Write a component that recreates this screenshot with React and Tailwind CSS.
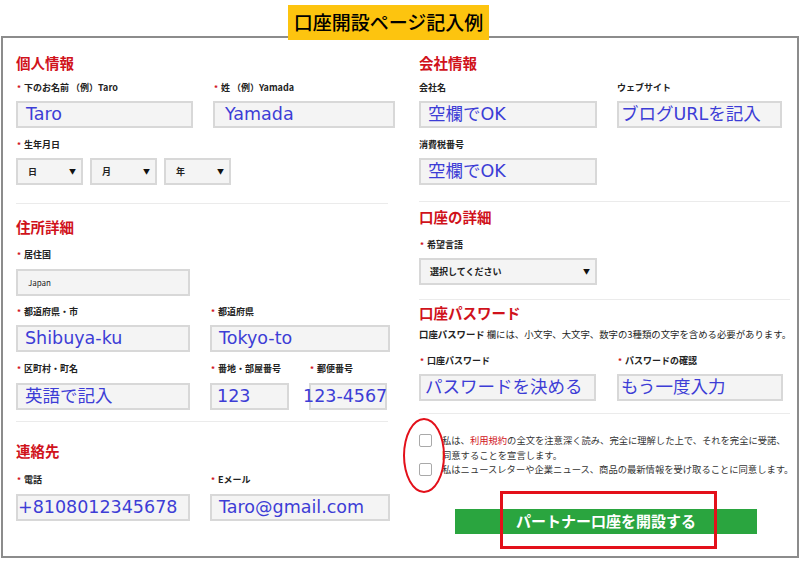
import React from "react";

const jp = "font-['Noto_Sans_CJK_JP',sans-serif]";
const val = "font-['DejaVu_Sans','Noto_Sans_CJK_JP',sans-serif]";

function Label({ req, children, className = "" }) {
  return (
    <div className={`flex items-center h-[14px] leading-[14px] text-[9px] font-bold text-[#222] whitespace-nowrap ${className}`}>
      {req && <span className="text-[#d0121b] text-[8px] ml-[1px] mr-[3px]">*</span>}
      {children}
    </div>
  );
}

function Box({ children, className = "", text = "pl-[7px]" }) {
  return (
    <div className={`h-[27px] bg-[#f4f4f4] border-2 border-[#d8d8d8] flex items-center ${text} text-[17.5px] text-[#3d3dd6] whitespace-nowrap ${val} ${className}`}>
      {children}
    </div>
  );
}

function Select({ label, className = "", pad = "pl-[10px] pr-[5px]" }) {
  return (
    <div className={`h-[27px] bg-[#f4f4f4] border-2 border-[#d8d8d8] flex items-center justify-between ${pad} ${className}`}>
      <span className="text-[9px] font-bold text-[#222]">{label}</span>
      <span className="text-[7px] text-[#111]">▼</span>
    </div>
  );
}

function Heading({ children, className = "" }) {
  return (
    <div className={`h-[20px] leading-[20px] text-[14.5px] font-bold text-[#d0121b] ${className}`}>
      {children}
    </div>
  );
}

export default function App() {
  return (
    <div className={`relative w-[800px] h-[567px] bg-white overflow-hidden ${jp}`}>
      {/* frame */}
      <div className="ml-[1px] mt-[36px] w-[798px] h-[522px] border-2 border-[#8c8c8c] flex pl-[13px] pt-[15px]">
        {/* left column */}
        <div className="w-[403px] shrink-0 flex flex-col">
          <Heading>個人情報</Heading>
          <div className="mt-[8px] flex">
            <Label req className="w-[197px]">下のお名前 （例）Taro</Label>
            <Label req>姓 （例）Yamada</Label>
          </div>
          <div className="mt-[6px] flex gap-[20px]">
            <Box className="w-[177px]" text="pl-[8px]">Taro</Box>
            <Box className="w-[182px]" text="pl-[10px]">Yamada</Box>
          </div>
          <Label req className="mt-[10px]">生年月日</Label>
          <div className="mt-[6px] flex gap-[7px]">
            <Select label="日" className="w-[67px]" />
            <Select label="月" className="w-[67px]" />
            <Select label="年" className="w-[67px]" />
          </div>
          <div className="mt-[18px] w-[372px] h-px bg-[#ebebeb]" />

          <Heading className="mt-[13px]">住所詳細</Heading>
          <Label req className="mt-[11px]">居住国</Label>
          <div className="mt-[7px] w-[174px] h-[27px] bg-[#f4f4f4] border-2 border-[#d8d8d8] flex items-center pl-[10px] text-[8px] text-[#222]">
            Japan
          </div>
          <div className="mt-[9px] flex">
            <Label req className="w-[194px]">都道府県・市</Label>
            <Label req>都道府県</Label>
          </div>
          <div className="mt-[6px] flex gap-[20px]">
            <Box className="w-[174px] h-[26px]">Shibuya-ku</Box>
            <Box className="w-[180px] h-[26px]">Tokyo-to</Box>
          </div>
          <div className="mt-[10px] flex">
            <Label req className="w-[194px]">区町村・町名</Label>
            <Label req className="w-[99px]">番地・部屋番号</Label>
            <Label req>郵便番号</Label>
          </div>
          <div className="mt-[7px] flex">
            <Box className="w-[174px] h-[26px]">英語で記入</Box>
            <Box className="w-[79px] h-[26px] ml-[20px]" text="pl-[5px]">123</Box>
            <Box className="w-[78px] h-[26px] ml-[20px]" text="pl-0">
              <span className="ml-[-8px]">123-4567</span>
            </Box>
          </div>
          <div className="mt-[11px] w-[372px] h-px bg-[#ebebeb]" />

          <Heading className="mt-[19px]">連絡先</Heading>
          <div className="mt-[12px] flex">
            <Label req className="w-[194px]">電話</Label>
            <Label req>Eメール</Label>
          </div>
          <div className="mt-[7px] flex gap-[20px]">
            <Box className="w-[174px] h-[26px]" text="pl-0">+8108012345678</Box>
            <Box className="w-[180px] h-[26px]" text="pl-[7px]">Taro@gmail.com</Box>
          </div>
        </div>

        {/* right column */}
        <div className="w-[371px] flex flex-col">
          <Heading>会社情報</Heading>
          <div className="mt-[8px] flex">
            <Label className="w-[198px]">会社名</Label>
            <Label>ウェブサイト</Label>
          </div>
          <div className="mt-[6px] flex gap-[20px]">
            <Box className="w-[178px]">空欄でOK</Box>
            <Box className="w-[165px]" text="pl-[2px]">ブログURLを記入</Box>
          </div>
          <Label className="mt-[10px]">消費税番号</Label>
          <Box className="mt-[6px] w-[178px]">空欄でOK</Box>
          <div className="mt-[16px] w-[371px] h-px bg-[#ebebeb]" />

          <Heading className="mt-[5px]">口座の詳細</Heading>
          <Label req className="mt-[11px]">希望言語</Label>
          <Select label="選択してください" className="mt-[6px] w-[178px] h-[26px]" pad="pl-[9px] pr-[5px]" />
          <div className="mt-[14px] w-[371px] h-px bg-[#ebebeb]" />

          <Heading className="mt-[3px]">口座パスワード</Heading>
          <div className="mt-[4px] h-[14px] leading-[14px] text-[9.4px] text-[#222] whitespace-nowrap">
            <span className="font-bold">口座パスワード</span> 欄には、小文字、大文字、数字の3種類の文字を含める必要があります。
          </div>
          <div className="mt-[13px] flex">
            <Label req className="w-[198px]">口座パスワード</Label>
            <Label req>パスワードの確認</Label>
          </div>
          <div className="mt-[6px] flex gap-[21px]">
            <Box className="w-[177px]" text="pl-[4px]">パスワードを決める</Box>
            <Box className="w-[166px]" text="pl-[2px]">もう一度入力</Box>
          </div>
          <div className="mt-[12px] w-[371px] h-px bg-[#ebebeb]" />

          <div className="mt-[19px] flex flex-col text-[9.3px] leading-[14.5px] text-[#333] whitespace-nowrap">
            <div className="flex items-start">
              <div className="mt-[1px] w-[13px] h-[13px] border border-[#a9a9a9] rounded-[2px] bg-white shrink-0" />
              <div className="ml-[10px]">
                私は、<span className="text-[#d0121b]">利用規約</span>の全文を注意深く読み、完全に理解した上で、それを完全に受諾、
                <br />
                同意することを宣言します。
              </div>
            </div>
            <div className="flex items-start">
              <div className="mt-[1px] w-[13px] h-[13px] border border-[#a9a9a9] rounded-[2px] bg-white shrink-0" />
              <div className="ml-[10px]">
                私はニュースレターや企業ニュース、商品の最新情報を受け取ることに同意します。
              </div>
            </div>
          </div>

          <div className="mt-[32px] ml-[36px] w-[302px] h-[25px] bg-[#2aa53f] flex items-center justify-center text-white text-[15px] font-bold">
            パートナー口座を開設する
          </div>
        </div>
      </div>

      {/* title banner */}
      <div className="absolute left-[288px] top-[5px] w-[201px] h-[35px] bg-[#fdc40f] flex items-center justify-center text-[19px] font-medium text-black">
        口座開設ページ記入例
      </div>

      {/* annotations */}
      <div className="absolute left-[403px] top-[418px] w-[42px] h-[75px] rounded-[50%] border-2 border-[#e3101a]" />
      <div className="absolute left-[500px] top-[491px] w-[217px] h-[58px] border-[3px] border-[#e3101a]" />
    </div>
  );
}
